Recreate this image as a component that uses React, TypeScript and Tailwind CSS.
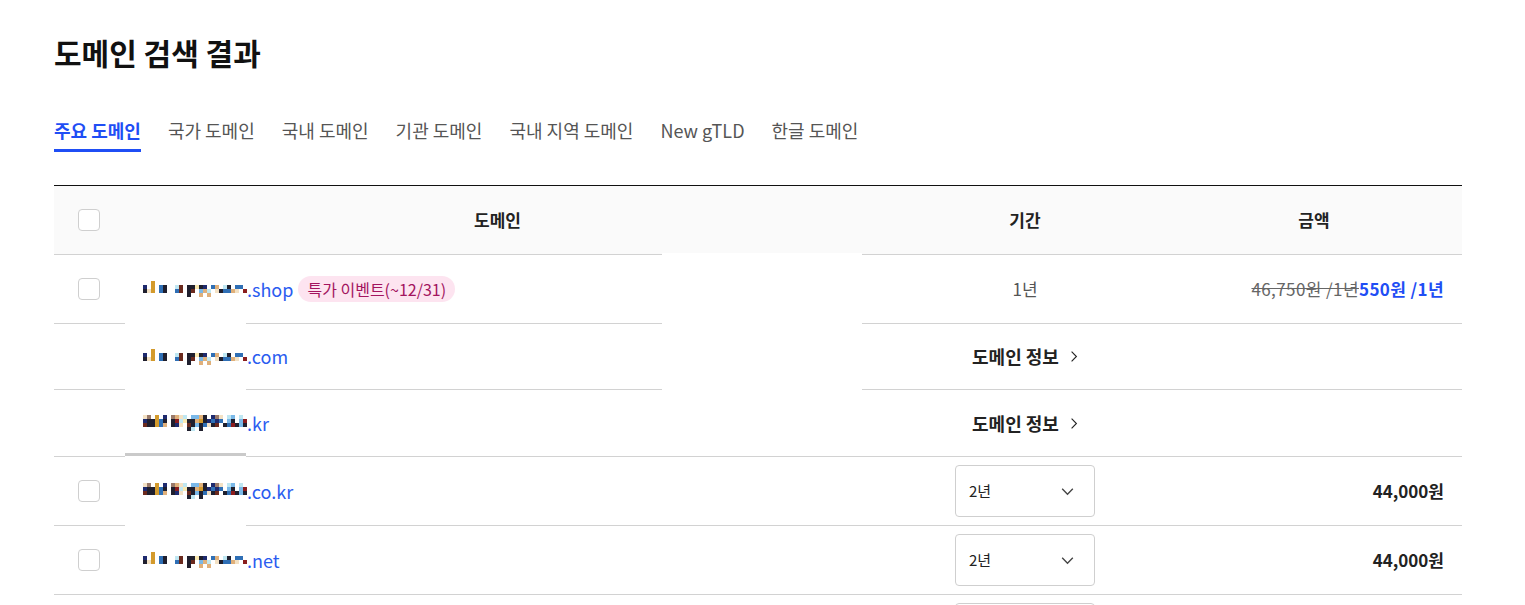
import React from "react";

const tabs = ["주요 도메인", "국가 도메인", "국내 도메인", "기관 도메인", "국내 지역 도메인", "New gTLD", "한글 도메인"];

// pixelated (masked) domain names, one letter per cell
const palette: Record<string, string> = {
  k: "#1f1f2e",
  g: "#d39a2c",
  b: "#2f6fb5",
  c: "#f3e1c4",
  r: "#6b2a1e",
  l: "#bfe7f2",
  y: "#fbe9b0",
  n: "#1e2a6e",
  s: "#e0b07a",
  p: "#7ab8e8",
  m: "#9a7a6a",
  w: "#8a1d1d",
};

const mosaicLight = [
  "..g.......................",
  "n.g.bk..lr.kkykn.bs.lk.bb.",
  "kcg.bk..br.kr.psl.ckbbsc.w",
  "...........k..s.s.........",
];

const mosaicDark = [
  "cm.g.n.mscl.ppsk.nmc.lp.l.",
  "nkkgbk.kwlykksgknbnb.pk.pw",
  "rkkgbs.knc.rkpkbckr.kbwkpk",
  "...........kl.k...........",
];

function Mosaic({ rows }: { rows: string[] }) {
  return (
    <span className="inline-flex flex-col">
      {rows.map((row, i) => (
        <span key={i} className="flex h-[4px]">
          {row.split("").map((ch, j) => (
            <span key={j} className="w-[4px] h-[4px]" style={{ backgroundColor: palette[ch] ?? "transparent" }} />
          ))}
        </span>
      ))}
    </span>
  );
}

function Checkbox() {
  return <span className="block w-[22px] h-[22px] rounded-[4px] border border-[#cfcfcf] bg-white" />;
}

function Chevron({ className }: { className?: string }) {
  return (
    <svg viewBox="0 0 16 16" className={className} fill="none" stroke="currentColor" strokeWidth="1.3">
      <path d="M3 5.5l5 5 5-5" />
    </svg>
  );
}

function Select({ label }: { label?: string }) {
  return (
    <div className="w-[140px] h-[52px] border border-[#cfcfcf] rounded-[4px] flex items-center justify-between pl-[13px] pr-[18px] text-[15px] text-[#222] bg-white">
      <span>{label}</span>
      <Chevron className="w-[17px] h-[17px] text-[#444]" />
    </div>
  );
}

function Domain({ dark, tld }: { dark?: boolean; tld: string }) {
  return (
    <span className="flex items-center">
      <Mosaic rows={dark ? mosaicDark : mosaicLight} />
      <span className="text-[18px] text-[#2a5cf0]">{tld}</span>
    </span>
  );
}

function DomainInfo() {
  return (
    <span className="flex items-center gap-[11px] font-bold text-[18px] text-[#222]">
      도메인 정보
      <svg viewBox="0 0 10 16" className="w-[8px] h-[15px]" fill="none" stroke="#222" strokeWidth="1.4">
        <path d="M2 2l6 6-6 6" />
      </svg>
    </span>
  );
}

export default function App() {
  return (
    <div className="bg-white min-h-[605px] px-[54px] pt-[30px] overflow-hidden" style={{ fontFamily: '"Noto Sans CJK KR", "Noto Sans", sans-serif' }}>
      <h1 className="text-[30px] font-bold text-[#111] leading-[44px]">도메인 검색 결과</h1>

      <div className="flex gap-[27px] mt-[42px]">
        {tabs.map((t, i) => (
          <div key={t} className="flex flex-col">
            <span className={i === 0 ? "text-[18px] font-bold text-[#1f4ef5] leading-[28px]" : "text-[18px] text-[#555] leading-[28px]"}>{t}</span>
            <span className={i === 0 ? "h-[3px] mt-[5px] bg-[#1f4ef5]" : "h-[3px] mt-[5px]"} />
          </div>
        ))}
      </div>

      <div className="relative w-[1408px] mt-[33px] border-t border-[#111]">
        {/* header */}
        <div className="flex h-[69px] bg-[#fafafa] border-b border-[#d2d2d2] items-center text-[17px] font-bold text-[#222]">
          <div className="w-[71px] pl-[24px]"><Checkbox /></div>
          <div className="w-[745px] text-center">도메인</div>
          <div className="w-[310px] text-center">기간</div>
          <div className="flex-1 text-center pr-[14px]">금액</div>
        </div>

        <div className="flex h-[69px] border-b border-[#d2d2d2] items-center">
          <div className="w-[71px] pl-[24px]"><Checkbox /></div>
          <div className="relative z-10 w-[745px] pl-[18px] flex items-center gap-[5px]">
            <Domain tld=".shop" />
            <span className="h-[26px] px-[9px] rounded-full bg-[#fde4f0] text-[#a3145f] text-[16px] flex items-center">특가 이벤트(~12/31)</span>
          </div>
          <div className="relative z-10 w-[310px] text-center text-[17px] text-[#555]">1년</div>
          <div className="flex-1 flex justify-end pr-[18px] text-[17px] tracking-[0.4px]">
            <span className="line-through text-[#666]">46,750원 /1년</span>
            <span className="font-bold text-[#1f4ef5]">550원 /1년</span>
          </div>
        </div>

        <div className="flex h-[66px] border-b border-[#d2d2d2] items-center">
          <div className="w-[71px]" />
          <div className="relative z-10 w-[745px] pl-[18px]"><Domain tld=".com" /></div>
          <div className="relative z-10 w-[310px] flex justify-center"><DomainInfo /></div>
        </div>

        <div className="flex h-[67px] border-b border-[#d2d2d2] items-center">
          <div className="w-[71px]" />
          <div className="relative z-10 w-[745px] pl-[18px]"><Domain dark tld=".kr" /></div>
          <div className="relative z-10 w-[310px] flex justify-center"><DomainInfo /></div>
        </div>

        <div className="flex h-[69px] border-b border-[#d2d2d2] items-center">
          <div className="w-[71px] pl-[24px]"><Checkbox /></div>
          <div className="relative z-10 w-[745px] pl-[18px]"><Domain dark tld=".co.kr" /></div>
          <div className="w-[310px] flex justify-center"><Select label="2년" /></div>
          <div className="flex-1 text-right pr-[18px] text-[17px] font-bold text-[#222]">44,000원</div>
        </div>

        <div className="flex h-[69px] border-b border-[#d2d2d2] items-center">
          <div className="w-[71px] pl-[24px]"><Checkbox /></div>
          <div className="relative z-10 w-[745px] pl-[18px]"><Domain tld=".net" /></div>
          <div className="w-[310px] flex justify-center"><Select label="2년" /></div>
          <div className="flex-1 text-right pr-[18px] text-[17px] font-bold text-[#222]">44,000원</div>
        </div>

        <div className="flex h-[60px] items-start pt-[8px]">
          <div className="w-[71px]" />
          <div className="w-[745px]" />
          <div className="w-[310px] flex justify-center"><Select /></div>
        </div>

        {/* masked patches in the capture, under the row content */}
        <div className="absolute left-[71px] top-[137px] w-[121px] h-[130px] bg-white" />
        <div className="absolute left-[71px] top-[267px] w-[121px] h-[3px] bg-[#cacaca]" />
        <div className="absolute left-[71px] top-[270px] w-[121px] h-[70px] bg-white" />
        <div className="absolute left-[608px] top-[67px] w-[200px] h-[137px] bg-white" />
      </div>
    </div>
  );
}
